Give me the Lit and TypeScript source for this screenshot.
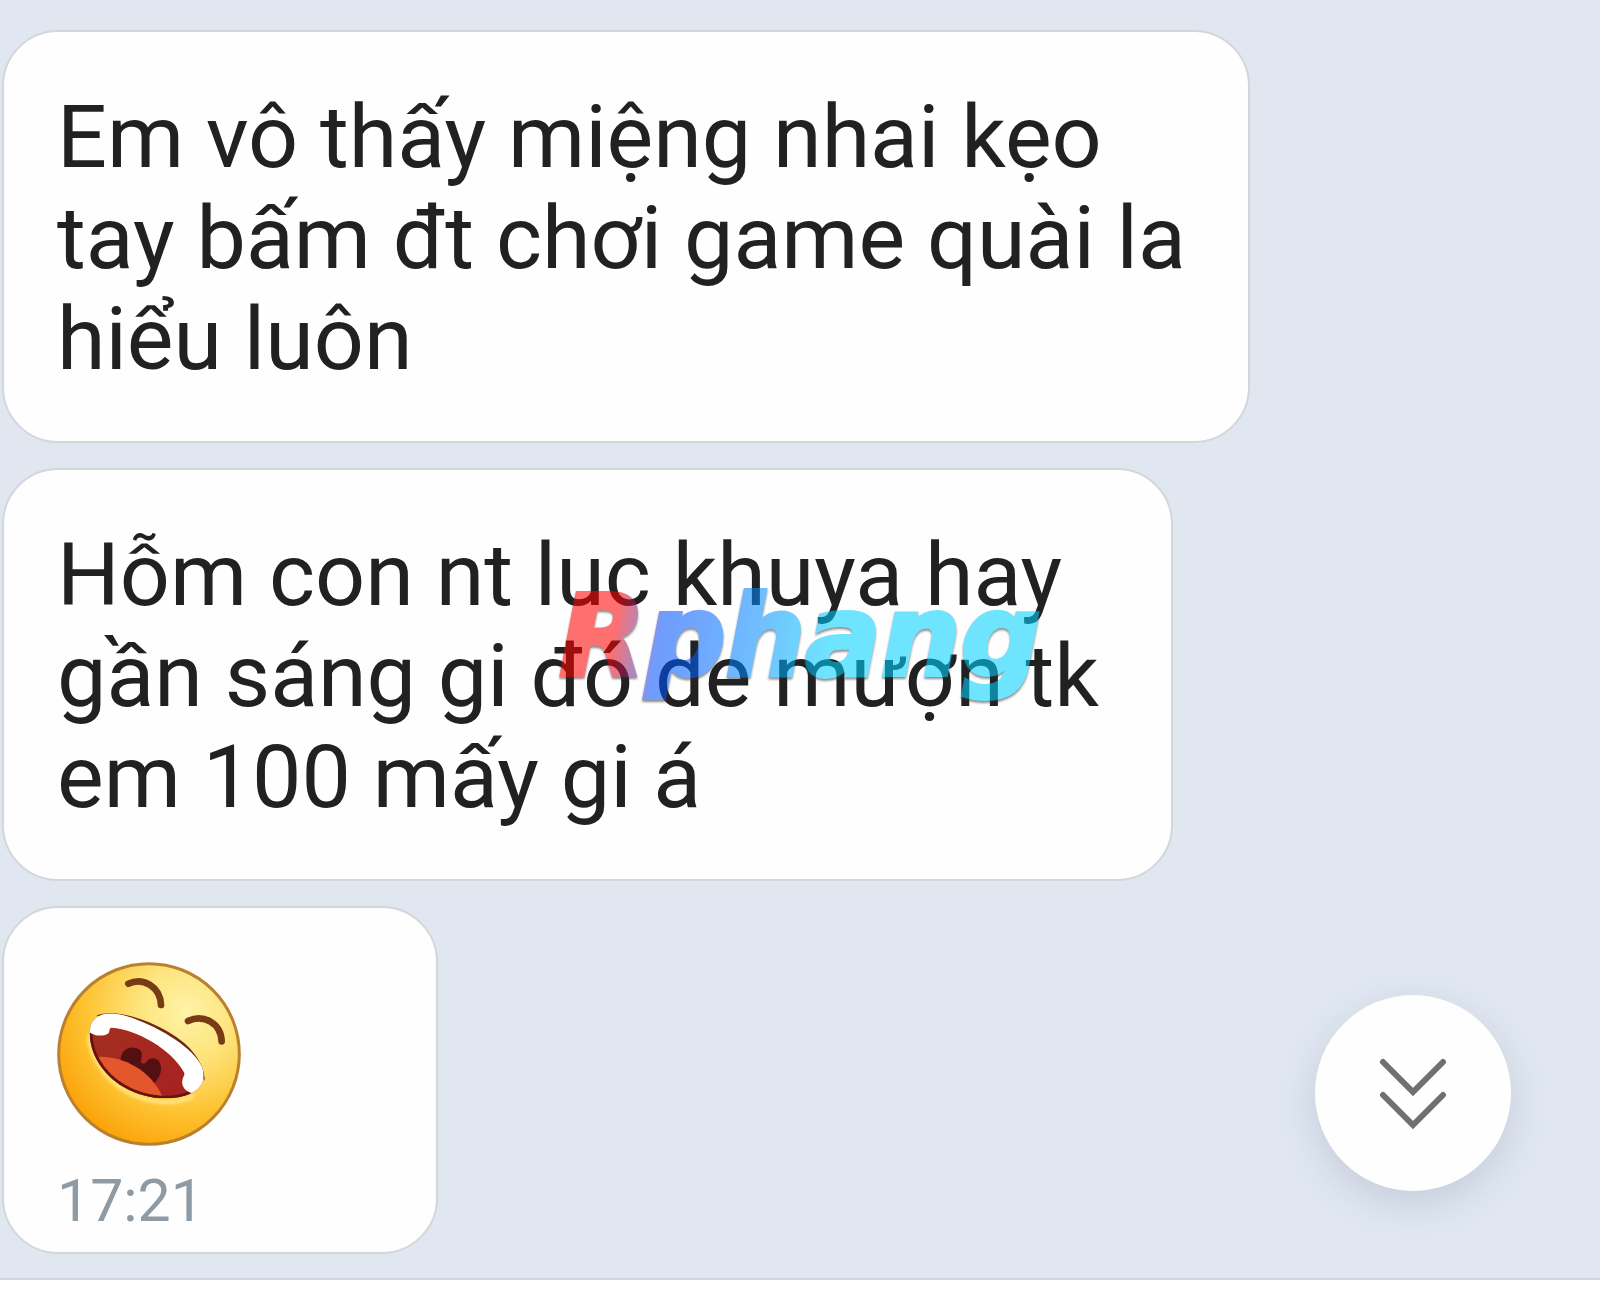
import { LitElement, html, css } from "lit";
import { customElement } from "lit/decorators.js";

@customElement("laughing-face")
class LaughingFace extends LitElement {
  static styles = css`
    :host { display: block; width: 184px; height: 184px; }
    .face { display: block; width: 100%; height: 100%; }
  `;

  render() {
    return html`
      <svg class="face" viewBox="52 67 552 552" role="img" aria-label="Laughing face">
        <defs>
          <radialGradient id="skin" gradientUnits="userSpaceOnUse" cx="440" cy="215" r="430">
            <stop offset="0" stop-color="#fff3a8" />
            <stop offset="0.35" stop-color="#fde37a" />
            <stop offset="0.72" stop-color="#fdc22f" />
            <stop offset="1" stop-color="#fba40c" />
          </radialGradient>
          <linearGradient id="throat" x1="0" y1="0" x2="1" y2="1">
            <stop offset="0" stop-color="#a3301f" />
            <stop offset="1" stop-color="#a81f22" />
          </linearGradient>
          <filter id="soft" x="-20%" y="-20%" width="140%" height="140%">
            <feGaussianBlur stdDeviation="5" />
          </filter>
          <clipPath id="mouth">
            <path d="M152 262C160 224 206 212 262 230C350 258 448 316 482 372C502 408 492 446 452 462C400 484 320 482 252 442C184 402 142 330 152 262Z" />
          </clipPath>
        </defs>
        <circle cx="328" cy="343" r="271" fill="url(#skin)" stroke="#b9802f" stroke-width="9" />
        <path d="M148 286C150 350 200 420 258 454C330 494 410 496 462 468" fill="none" stroke="#ffe27c" stroke-width="14" filter="url(#soft)" />
        <path d="M170 228C230 204 340 244 410 292C460 326 496 376 495 424L470 380C400 300 280 240 180 230Z" fill="#6d2a14" />
        <g clip-path="url(#mouth)">
          <rect x="140" y="210" width="370" height="280" fill="url(#throat)" />
          <path d="M242 362C244 328 274 314 300 330C312 340 304 356 304 368C310 376 318 372 324 362C340 348 364 358 364 386C364 404 356 418 344 430L250 372Z" fill="#541011" />
          <path d="M170 352C240 346 330 386 368 470L300 490L190 430Z" fill="#e4572c" />
          <path d="M152 262C142 330 184 402 252 442C320 482 400 484 452 462" fill="none" stroke="#65130f" stroke-width="16" />
          <path d="M140 270C155 286 184 294 205 282C212 276 206 266 216 264C292 270 394 328 432 396C440 406 424 414 428 434C432 452 450 460 466 462L510 440L500 350L300 200L150 200Z" fill="#fff" />
        </g>
        <path d="M266 132C310 112 362 140 364 196" fill="none" stroke="#793b14" stroke-width="20" stroke-linecap="round" />
        <path d="M445 244C492 222 544 250 546 305" fill="none" stroke="#793b14" stroke-width="20" stroke-linecap="round" />
      </svg>
    `;
  }
}

@customElement("app-root")
class AppRoot extends LitElement {
  static styles = css`
    :host {
      display: flex;
      flex-direction: column;
      position: relative;
      min-height: 100vh;
      overflow: hidden;
      background: #fff;
      color: #212121;
      font-family: Roboto, "Noto Sans", sans-serif;
    }
    .chat {
      flex: 1;
      display: flex;
      flex-direction: column;
      align-items: flex-start;
      gap: 25px;
      position: relative;
      box-sizing: border-box;
      padding: 30px 2px 24px;
      background: #e0e7f1;
      border-bottom: 2px solid #d0d7dc;
    }
    .bubble {
      box-sizing: border-box;
      padding: 54px 62px 52px 53px;
      background: #fefefe;
      border: 2px solid #d3d7d9;
      border-radius: 56px;
    }
    .roomy { padding-right: 72px; }
    .text { margin: 0; font-size: 88px; line-height: 101px; }
    .reaction { min-width: 436px; padding-bottom: 16px; }
    .time { display: block; margin-top: 20px; font-size: 59px; line-height: 70px; color: #8f9ba4; }
    .jump {
      position: absolute;
      right: 89px;
      bottom: 87px;
      display: grid;
      place-items: center;
      width: 196px;
      height: 196px;
      padding: 0;
      border: 0;
      border-radius: 50%;
      background: #fefefe;
      box-shadow: 0 12px 36px rgba(100, 115, 135, 0.22);
      cursor: pointer;
    }
    .chevrons { width: 72px; height: 72px; }
    .composer { height: 11px; background: #fff; }
    .watermark {
      position: absolute;
      inset: 0;
      display: grid;
      place-items: center;
      pointer-events: none;
      opacity: 0.56;
      filter: drop-shadow(0 2px 1px #333);
    }
    .brand {
      padding: 0 8px 20px;
      font: italic bold 112px/130px "DejaVu Sans", sans-serif;
      color: transparent;
      -webkit-text-stroke: 4px transparent;
      background: linear-gradient(100deg, #f00 14%, #0050ff 23%, #0068ff 32%, #0090ff 42%, #00d1ff 56%);
      -webkit-background-clip: text;
      background-clip: text;
    }
  `;

  render() {
    return html`
      <main class="chat">
        <article class="bubble">
          <p class="text">Em vô thấy miệng nhai kẹo<br />tay bấm đt chơi game quài la<br />hiểu luôn</p>
        </article>
        <article class="bubble roomy">
          <p class="text">Hỗm con nt luc khuya hay<br />gần sáng gi đó de mượn tk<br />em 100 mấy gi á</p>
        </article>
        <article class="bubble reaction">
          <laughing-face></laughing-face>
          <time class="time">17:21</time>
        </article>
        <button class="jump" type="button" aria-label="Jump to latest message">
          <svg class="chevrons" viewBox="0 0 72 72" fill="none" stroke="#707070" stroke-width="6" stroke-linecap="round" aria-hidden="true">
            <path d="M6 5L36 35L66 5M6 38L36 68L66 38" />
          </svg>
        </button>
      </main>
      <footer class="composer"></footer>
      <div class="watermark"><span class="brand">Rphang</span></div>
    `;
  }
}
